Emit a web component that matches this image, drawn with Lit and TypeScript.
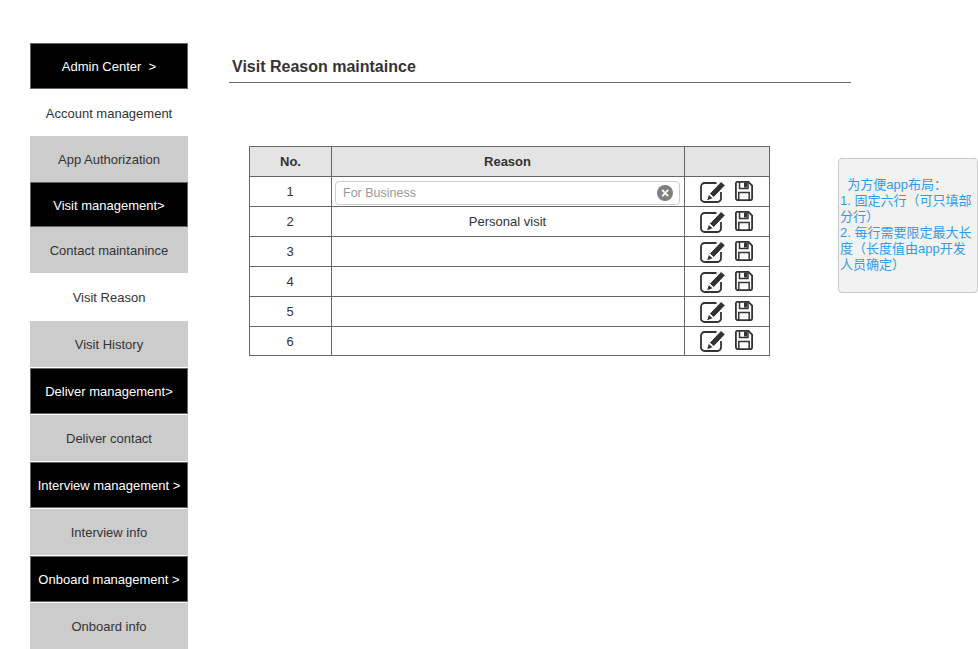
import { LitElement, css, html, nothing, svg } from "lit";
import { customElement } from "lit/decorators.js";

type NavKind = "head" | "plain" | "sub";

interface NavItem {
  label: string;
  kind: NavKind;
  height: number;
  gap?: number;
  nudge?: number;
}

const NAV: NavItem[] = [
  { label: "Admin Center  >", kind: "head", height: 46 },
  { label: "Account management", kind: "plain", height: 47, nudge: 1 },
  { label: "App Authorization", kind: "sub", height: 46 },
  { label: "Visit management>", kind: "head", height: 45, nudge: 1 },
  { label: "Contact maintanince", kind: "sub", height: 46 },
  { label: "Visit Reason", kind: "plain", height: 48 },
  { label: "Visit History", kind: "sub", height: 46 },
  { label: "Deliver management>", kind: "head", height: 46, gap: 1 },
  { label: "Deliver contact", kind: "sub", height: 46, gap: 1 },
  { label: "Interview management >", kind: "head", height: 46, gap: 1 },
  { label: "Interview info", kind: "sub", height: 46, gap: 1 },
  { label: "Onboard management >", kind: "head", height: 46, gap: 1 },
  { label: "Onboard info", kind: "sub", height: 46, gap: 1 }
];

const editIcon = svg`
  <svg class="icon" width="26" height="24" viewBox="0 0 26 24">
    <path d="M16.500 3H4.500A3.500 3.500 0 0 0 1 6.500v12A3.500 3.500 0 0 0 4.500 22h13a3.500 3.500 0 0 0 3.500-3.500V12" fill="none" stroke="#333" stroke-width="1.800"/>
    <path d="M21 1.500l4.300 3.800-11.500 12.200-4.300-3.800z" fill="#333" stroke="#fff" stroke-width="1"/>
    <path d="M8.800 15l3.700 3.300-5.300 1.900z" fill="#333"/>
  </svg>
`;

const saveIcon = svg`
  <svg class="icon save" width="18" height="20" viewBox="0 0 18 20">
    <path d="M2.200 0.900h11.300L17.100 4.500v12.700a2 2 0 0 1-2 2H2.900a2 2 0 0 1-2-2V2.200a1.300 1.300 0 0 1 1.300-1.300z" fill="none" stroke="#333" stroke-width="1.800"/>
    <path d="M4.500 1v6.500h8.500V1" fill="none" stroke="#333" stroke-width="1.500"/>
    <rect x="9" y="1.500" width="3.200" height="5" fill="#333"/>
    <path d="M3.800 19v-7.500h10.400V19" fill="none" stroke="#333" stroke-width="1.500"/>
  </svg>
`;

@customElement("app-root")
export class AppRoot extends LitElement {
  private renderRow(no: number) {
    let reason: unknown = nothing;
    if (no === 1) {
      reason = html`
        <div class="field">
          <span class="placeholder">For Business</span>
          <span class="clear">×</span>
        </div>
      `;
    } else if (no === 2) {
      reason = "Personal visit";
    }
    return html`
      <tr class=${no === 6 ? "last" : ""}>
        <td>${no}</td>
        <td class=${no === 1 ? "with-field" : ""}>${reason}</td>
        <td><div class="actions">${editIcon}${saveIcon}</div></td>
      </tr>
    `;
  }

  protected render() {
    return html`
      <div class="page">
        <nav class="nav">
          ${NAV.map(
            (item) => html`
              <div
                class="nav-item ${item.kind}"
                style="height:${item.height}px;margin-top:${item.gap ?? 0}px;padding-top:${item.nudge ?? 0}px"
              >
                <span class="nav-label">${item.label}</span>
              </div>
            `
          )}
        </nav>

        <main class="main">
          <h1 class="title">Visit Reason maintaince</h1>
          <table class="grid">
            <colgroup>
              <col class="col-no" />
              <col class="col-reason" />
              <col class="col-actions" />
            </colgroup>
            <thead>
              <tr>
                <th class="no-head">No.</th>
                <th>Reason</th>
                <th></th>
              </tr>
            </thead>
            <tbody>${[1, 2, 3, 4, 5, 6].map((no) => this.renderRow(no))}</tbody>
          </table>
        </main>

        <aside class="note">
          <div>&nbsp;&nbsp;为方便app布局：</div>
          <div>1. 固定六行（可只填部分行）</div>
          <div>2. 每行需要限定最大长度（长度值由app开发人员确定）</div>
        </aside>
      </div>
    `;
  }

  static styles = css`
    :host {
      display: block;
      font-family: "Liberation Sans", Arial, "Noto Sans CJK SC", sans-serif;
      font-size: 13px;
      color: #333;
    }

    .page {
      display: flex;
      align-items: flex-start;
      width: 978px;
      height: 649px;
      overflow: hidden;
      background: #fff;
    }

    .nav {
      flex: none;
      width: 158px;
      margin: 43px 0 0 30px;
    }

    .nav-item {
      display: flex;
      align-items: center;
      justify-content: center;
      box-sizing: border-box;
    }

    .nav-label {
      white-space: pre;
    }

    .head {
      background: #000;
      color: #fff;
      border: 1px solid #666;
    }

    .plain {
      background: #fff;
    }

    .sub {
      background: #ccc;
    }

    .main {
      flex: none;
      width: 622px;
      margin: 43px 0 0 41px;
    }

    .title {
      box-sizing: border-box;
      height: 40px;
      margin: 0;
      padding: 14px 0 0 3px;
      border-bottom: 1px solid #666;
      font-size: 16px;
      line-height: 19px;
      font-weight: 700;
    }

    .grid {
      width: 520px;
      margin: 63px 0 0 20px;
      border-collapse: collapse;
      table-layout: fixed;
    }

    .col-no {
      width: 82px;
    }

    .col-reason {
      width: 353px;
    }

    .col-actions {
      width: 85px;
    }

    th,
    td {
      height: 30px;
      box-sizing: border-box;
      padding: 0 1px 0 0;
      border: 1px solid #666;
      text-align: center;
      vertical-align: middle;
    }

    .last td {
      height: 29px;
    }

    th {
      background: #e4e4e4;
      font-weight: 700;
      font-size: 13px;
    }

    th.no-head {
      padding: 0;
    }

    td.with-field {
      padding: 3px 4px 0 3px;
    }

    .field {
      display: flex;
      align-items: center;
      justify-content: space-between;
      box-sizing: border-box;
      height: 24px;
      padding: 0 6px 0 7px;
      border: 1px solid #ccc;
      border-radius: 4px;
    }

    .placeholder {
      color: #999;
      font-size: 12.5px;
    }

    .clear {
      display: flex;
      align-items: center;
      justify-content: center;
      width: 16px;
      height: 16px;
      border-radius: 50%;
      background: #7f7f7f;
      color: #fff;
      font-size: 14px;
      font-weight: 700;
      line-height: 16px;
    }

    .actions {
      display: flex;
      align-items: center;
      justify-content: center;
      gap: 9px;
    }

    .icon {
      display: block;
    }

    .save {
      margin-bottom: 2px;
    }

    .note {
      flex: none;
      box-sizing: border-box;
      width: 140px;
      height: 135px;
      margin: 158px 0 0 -13px;
      padding: 18px 2px 0 1px;
      border: 1px solid #ccc;
      border-radius: 4px;
      background: #f2f2f2;
      color: #2d9cf0;
      font-size: 13px;
      line-height: 16px;
      text-spacing-trim: space-all;
    }
  `;
}
